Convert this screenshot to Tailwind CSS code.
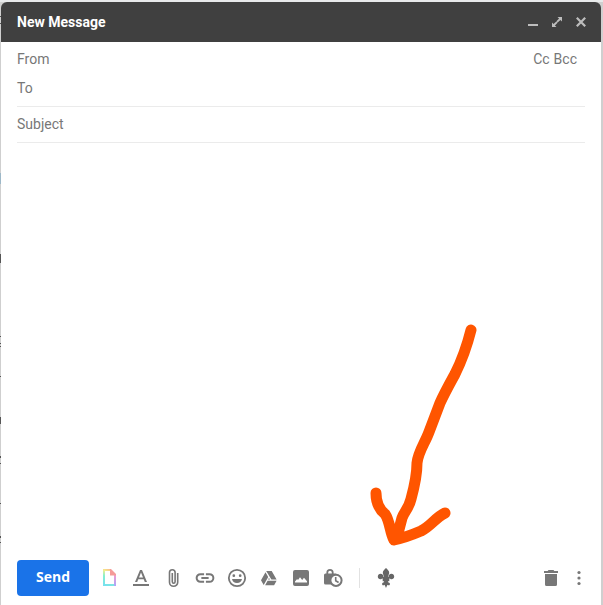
<!DOCTYPE html>
<html lang="en">
<head>
<meta charset="utf-8">
<meta name="viewport" content="width=device-width, initial-scale=1">
<title>New Message</title>
<script src="https://cdn.jsdelivr.net/npm/@tailwindcss/browser@4"></script>
</head>
<body class="bg-[#cfcfcf] font-['Roboto',sans-serif] text-sm text-[#777777]">
<main class="relative flex min-h-screen flex-col border-t-2 border-[#e8eaeb] pl-px pr-0.5">
  <svg class="absolute left-0 top-0 h-150 w-px" viewBox="0 0 1 600" fill="#555555" aria-hidden="true"><path d="M0 14h1v1H0zM0 21h1v1H0zM0 252h1v9H0zM0 334h1v1H0zM0 341h1v1H0zM0 344h1v1H0zM0 374h1v1H0zM0 415h1v7H0zM0 454h1v2H0zM0 461h1v1H0zM0 501h1v1H0zM0 534h1v2H0zM0 540h1v1H0z"/><path d="M0 171h1v11H0z" fill="#9db8c8"/></svg>
  <header class="flex h-10 items-center justify-between rounded-t-md bg-[#404040] pl-4 pr-2.5 text-[#bdbdbd]">
    <h1 class="font-bold text-white">New Message</h1>
    <div class="flex gap-1">
      <button type="button" aria-label="Minimize" class="grid size-5 place-items-center"><svg class="size-4" viewBox="0 0 16 16" fill="currentColor"><path d="M3 10h10v2H3z"/></svg></button>
      <button type="button" aria-label="Full screen" class="grid size-5 place-items-center"><svg class="size-4" viewBox="0 0 16 16" fill="currentColor"><path d="M8.500 3H13v4.500l-1.600-1.600-2.700 2.700-1.300-1.300 2.700-2.700zM7.500 13H3V8.500l1.600 1.600 2.700-2.700 1.300 1.300-2.700 2.700z"/></svg></button>
      <button type="button" aria-label="Close" class="grid size-5 place-items-center"><svg class="size-4" viewBox="0 0 16 16" fill="none" stroke="currentColor" stroke-width="2.200"><path d="M3.800 3.800l8.400 8.400M12.200 3.800l-8.400 8.400"/></svg></button>
    </div>
  </header>
  <form class="flex grow flex-col bg-white">
    <div class="px-4">
      <div class="flex h-8 items-center pt-0.5">
        <label for="from">From</label>
        <input id="from" class="mx-2 min-w-0 grow outline-none">
        <div class="flex gap-1 pr-2">
          <button type="button">Cc</button>
          <button type="button">Bcc</button>
        </div>
      </div>
      <div class="flex h-[33px] items-start border-b border-[#ebebeb] pt-1">
        <label for="to">To</label>
        <input id="to" class="mx-2 min-w-0 grow outline-none">
      </div>
      <div class="flex h-9 items-center border-b border-[#ebebeb] pb-0.5">
        <label for="subject">Subject</label>
        <input id="subject" class="mx-2 min-w-0 grow outline-none">
      </div>
    </div>
    <textarea aria-label="Message body" class="grow resize-none px-4 py-2 outline-none"></textarea>
    <footer class="flex items-center px-4 pb-[9px]">
      <button type="button" class="h-9 w-18 rounded bg-[#1a73e8] pb-0.5 font-['Open_Sans',sans-serif] font-bold text-white">Send</button>
      <div class="ml-2.5 flex items-center gap-3">
        <button type="button" aria-label="Templates"><svg class="size-5" viewBox="0 0 20 20" fill="none">
          <defs><linearGradient id="rainbow" x1="12" y1="1" x2="5" y2="18" gradientUnits="userSpaceOnUse"><stop stop-color="#ffae8e"/><stop offset=".2" stop-color="#f3ee8b"/><stop offset=".5" stop-color="#83efd0"/><stop offset="1" stop-color="#76dff2"/></linearGradient><linearGradient id="violet" x1="16" y1="7" x2="16" y2="18" gradientUnits="userSpaceOnUse"><stop stop-color="#f29bd0"/><stop offset="1" stop-color="#a9a6fb"/></linearGradient></defs>
          <path d="M11.500 2H5v15H15" stroke="url(#rainbow)" stroke-width="2"/><path d="M15 6.500h2V18h-2z" fill="url(#violet)"/><path d="M11 1h1l5 5v1.500h-6z" fill="#f59b98"/></svg></button>
        <button type="button" aria-label="Formatting options"><svg class="size-5" viewBox="0 0 20 20" fill="currentColor"><path d="M2 16h16v2H2zM9 2h2l5 12h-2.200l-1.100-2.800H7.300L6.200 14H4zm1 2.400L8 9.400h4z"/></svg></button>
        <button type="button" aria-label="Attach files"><svg class="size-5" viewBox="0 0 20 20" fill="none" stroke="currentColor" stroke-width="1.600"><path d="M14.700 5v9.200a4.100 4.100 0 0 1-8.200 0V4.500a2.800 2.800 0 0 1 5.600 0v9.300a1.400 1.400 0 0 1-2.800 0V5"/></svg></button>
        <button type="button" aria-label="Insert link"><svg class="size-5" viewBox="1 1 22 22" fill="currentColor"><path d="M3.900 12c0-1.710 1.390-3.100 3.100-3.100h4V6.700H7a5.300 5.300 0 0 0 0 10.600h4v-2.200H7c-1.710 0-3.100-1.390-3.100-3.100zM8 13h8v-2H8zm9-6.300h-4v2.200h4a3.100 3.100 0 0 1 0 6.200h-4v2.200h4a5.300 5.300 0 0 0 0-10.600z"/></svg></button>
        <button type="button" aria-label="Insert emoji"><svg class="size-5" viewBox="1 1 22 22" fill="currentColor"><path d="M12 2a10 10 0 1 0 0 20 10 10 0 0 0 0-20zm0 18a8 8 0 1 1 0-16 8 8 0 0 1 0 16zm3.500-9a1.500 1.500 0 1 0 0-3 1.500 1.500 0 0 0 0 3zm-7 0a1.500 1.500 0 1 0 0-3 1.500 1.500 0 0 0 0 3zM6.500 13a5.600 5.600 0 0 0 11 0z"/></svg></button>
        <button type="button" aria-label="Insert files using Drive"><svg class="size-5" viewBox="0 0 20 20" fill="currentColor"><path d="M7.200 3h5.500l4.900 8.600h-5.200zM6.500 4.200l2.700 4.700-4.500 8L2 12.200zM8.600 12.800h9L15.100 17.200H6.100zM10 9.900l1 1.700H9z"/></svg></button>
        <button type="button" aria-label="Insert photo"><svg class="size-5" viewBox="0 0 20 20" fill="currentColor"><path fill-rule="evenodd" d="M4 2h12a2 2 0 0 1 2 2v12a2 2 0 0 1-2 2H4a2 2 0 0 1-2-2V4a2 2 0 0 1 2-2zm0 12.500h12v-1.300l-3-3.500-1.800 2.200-2.200-2.600-2 2.600-.9-.8L4 13.500z"/></svg></button>
        <button type="button" aria-label="Confidential mode"><svg class="size-5" viewBox="0 0 20 20" fill="none" stroke="currentColor"><path d="M4.300 6V4.500a2.700 2.700 0 0 1 5.400 0V6" stroke-width="1.800"/><path d="M2.500 5.500h10a1.500 1.500 0 0 1 1.500 1.500v9.500H2.500A1.500 1.500 0 0 1 1 15V7a1.500 1.500 0 0 1 1.500-1.500z" fill="currentColor" stroke="none"/><circle cx="13" cy="12.300" r="5.600" fill="white" stroke-width="2"/><path d="M12.700 9v3.700l2.900 1.800" stroke-width="1.600"/></svg></button>
      </div>
      <div class="ml-4 h-5 w-px bg-[#e2e2e2]"></div>
      <button type="button" aria-label="Fleur-de-lis extension" class="ml-4"><svg class="size-5" viewBox="0 0 20 20" fill="#666666"><path d="M10 0c1.400 1.400 3.200 2.800 3.200 4.700 0 1.400-1 2.300-1.200 4.300h.5c-.2-2 1.200-3.300 2.900-3.300 1.600 0 2.800 1.200 2.800 2.800 0 1.700-1.200 2.800-2.600 2.800-.9 0-1.500-.4-1.700-1-.5.300-.6.700-.6 1.200v1.800h-1.500c.3 1.100 1 1.700 2 1.700v2c-1.100.5-1.900.3-2.400-.3L10 20l-1.400-3.300c-.5.600-1.300.8-2.400.3v-2c1 0 1.700-.6 2-1.700H6.700v-1.800c0-.5-.1-.9-.6-1.200-.2.600-.8 1-1.700 1-1.400 0-2.600-1.100-2.600-2.800 0-1.600 1.200-2.800 2.800-2.800 1.700 0 3.100 1.300 2.900 3.300H8c-.2-2-1.200-2.900-1.200-4.300C6.800 2.800 8.600 1.400 10 0z"/></svg></button>
      <div class="ml-auto flex items-center gap-2">
        <button type="button" aria-label="Discard draft"><svg class="size-5" viewBox="0 0 20 20" fill="currentColor"><path d="M7.500 2h5l.8 1H17v2H3V3h3.700zM4 6h12v10.500a1.500 1.500 0 0 1-1.500 1.500h-9A1.500 1.500 0 0 1 4 16.500z"/></svg></button>
        <button type="button" aria-label="More options" class="-mr-1"><svg class="size-5" viewBox="0 0 20 20" fill="currentColor"><circle cx="10" cy="4.500" r="1.600"/><circle cx="10" cy="10" r="1.600"/><circle cx="10" cy="15.500" r="1.600"/></svg></button>
      </div>
    </footer>
  </form>
  <svg class="pointer-events-none absolute bottom-12 left-90 h-61 w-31" viewBox="360 313 124 244" fill="none" stroke="#ff5500" stroke-width="11" stroke-linecap="round" stroke-linejoin="round" aria-hidden="true"><path d="M471 330C467 346 461 362 455 374C449 385 444 394 440 403L429 432C425 443 418 452 417 463C417 475 414 488 411 499C409 508 404 512 402 518L397 537M376 493C376 504 380 510 385 514C390 521 390 533 394 540C403 538 414 534 421 531C431 526 435 518 445 513"/></svg>
</main>
</body>
</html>
